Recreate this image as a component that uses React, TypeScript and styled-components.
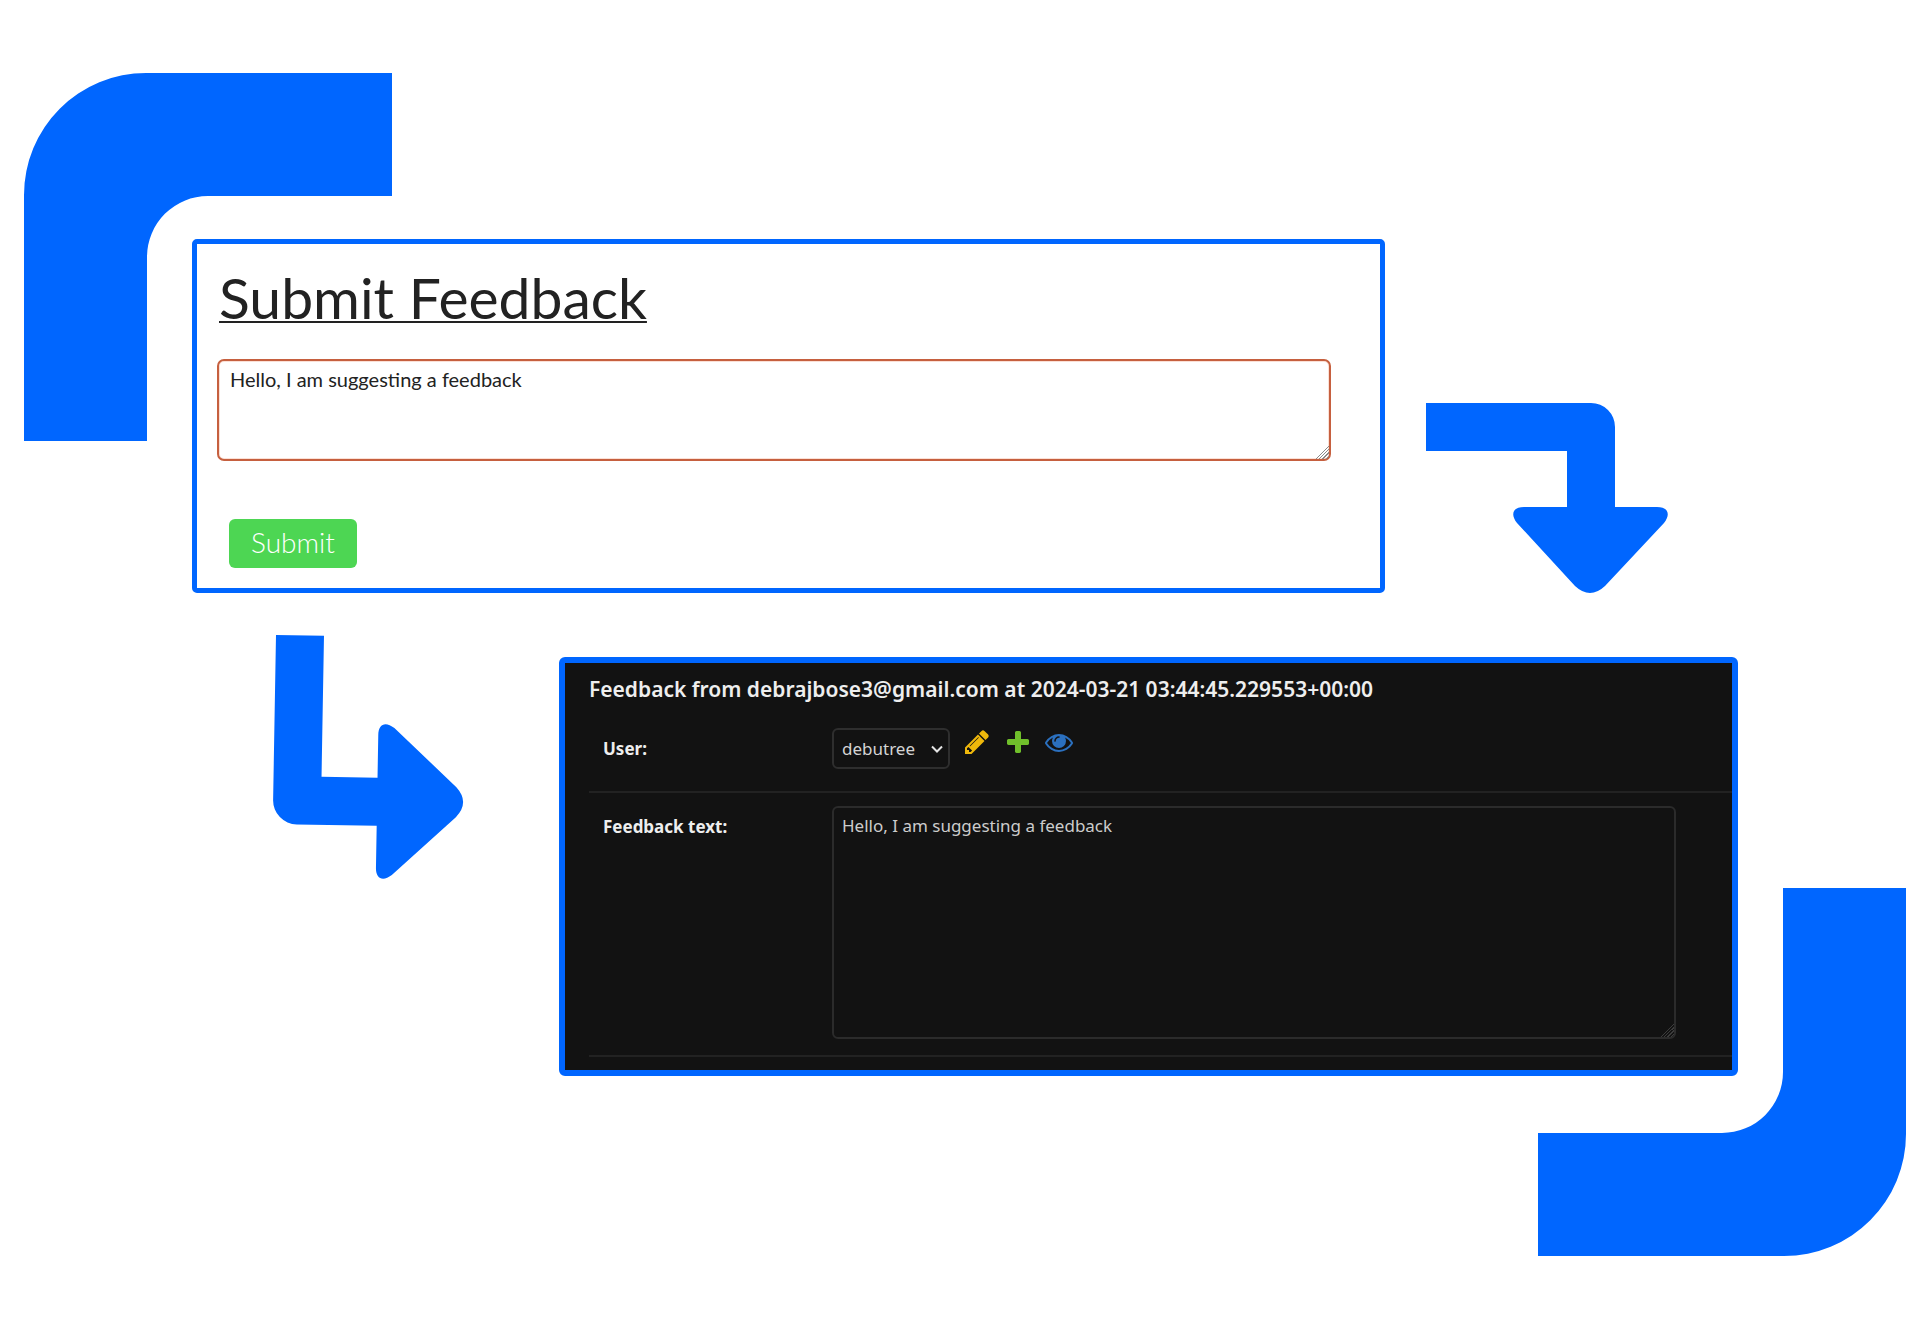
import React from "react";
import styled, { createGlobalStyle } from "styled-components";

const BLUE = "#0066ff";

const GlobalStyle = createGlobalStyle`
  *, *::before, *::after { box-sizing: border-box; }
  body { margin: 0; background: #ffffff; }
`;

const Page = styled.main`
  position: relative;
  display: flex;
  flex-direction: column;
  gap: 42px;
  min-height: 100vh;
  padding: 239px 0 70px;
  overflow: hidden;
`;

const Corner = styled.svg<{ $end?: boolean }>`
  position: absolute;
  width: 368px;
  height: 368px;
  fill: ${BLUE};
  ${(p) => (p.$end ? "right: 14px; bottom: 70px; transform: rotate(180deg);" : "left: 24px; top: 73px;")}
`;

const Step = styled.div<{ $second?: boolean }>`
  position: relative;
  display: flex;
  gap: ${(p) => (p.$second ? "96px" : "41px")};
  align-items: ${(p) => (p.$second ? "flex-start" : "flex-end")};
  padding: ${(p) => (p.$second ? "0 182px 0 273px" : "0 251px 0 192px")};
`;

const Arrow = styled.svg`
  flex: none;
  fill: ${BLUE};
  overflow: visible;
`;

const SubmitCard = styled.form`
  flex: 1;
  min-width: 0;
  display: flex;
  flex-direction: column;
  align-items: flex-start;
  padding: 23px 49px 20px 20px;
  border: 5px solid ${BLUE};
  border-radius: 5px;
  background: #ffffff;
  font-family: Lato, "Liberation Sans", sans-serif;
`;

const Title = styled.h1`
  margin: 0 0 32px;
  padding-left: 2px;
  color: #222222;
  font-size: 57px;
  font-weight: 400;
  line-height: 60px;
  text-decoration: underline;
  text-decoration-thickness: 2px;
  text-underline-offset: 2px;
  text-decoration-skip-ink: none;
`;

const TextArea = styled.textarea<{ $grip: string }>`
  display: block;
  width: 100%;
  outline: none;
  font-family: inherit;
  line-height: 26px;

  &::-webkit-resizer {
    background: linear-gradient(
      135deg,
      transparent 54%,
      ${(p) => p.$grip} 54% 59%,
      transparent 59% 65%,
      ${(p) => p.$grip} 65% 70%,
      transparent 70% 76%,
      ${(p) => p.$grip} 76% 81%,
      transparent 81% 87%,
      ${(p) => p.$grip} 87% 92%,
      transparent 92%
    );
  }
`;

const MessageBox = styled(TextArea)`
  height: 102px;
  margin-bottom: 58px;
  padding: 5px 11px;
  border: 2px solid #c6603f;
  border-radius: 7px;
  box-shadow: inset 0 0 0 1px #fbe0d6;
  background: #ffffff;
  color: #222222;
  font-size: 20px;
`;

const SubmitButton = styled.button`
  width: 128px;
  height: 49px;
  margin-left: 12px;
  padding: 0 0 4px;
  border: 0;
  border-radius: 6px;
  background: #4dd653;
  color: #ffffff;
  font-family: inherit;
  font-size: 28px;
  font-weight: 300;
  line-height: 36px;
`;

const AdminCard = styled.form`
  flex: 1;
  min-width: 0;
  margin-top: 22px;
  padding: 10px 0 13px 24px;
  border: 6px solid ${BLUE};
  border-radius: 6px;
  background: #121212;
  color: #eeeeee;
  color-scheme: dark;
  font-family: "Noto Sans", "Open Sans", sans-serif;
`;

const RecordTitle = styled.h2`
  margin: 0;
  font-size: 21px;
  font-weight: 600;
  line-height: 32px;
  white-space: nowrap;
`;

const FieldRow = styled.div<{ $tall?: boolean }>`
  display: grid;
  grid-template-columns: 229px minmax(0, 1fr);
  padding: ${(p) => (p.$tall ? "13px 56px 16px 14px" : "23px 56px 22px 14px")};
  border-bottom: 2px solid #222222;
`;

const FieldLabel = styled.label`
  padding-top: 8px;
  font-size: 17px;
  font-weight: 700;
  line-height: 26px;
`;

const Controls = styled.div`
  display: flex;
  align-items: flex-start;
  gap: 13px;
`;

const SelectWrap = styled.span`
  position: relative;
  display: block;
  width: 118px;
  height: 41px;
`;

const UserSelect = styled.select`
  appearance: none;
  width: 100%;
  height: 100%;
  padding: 0 8px;
  border: 2px solid #2e2e2e;
  border-radius: 6px;
  background: #121212;
  color: #d4d4d4;
  font-family: inherit;
  font-size: 17px;
`;

const Chevron = styled.svg`
  position: absolute;
  right: 7px;
  top: 16px;
  width: 12px;
  height: 10px;
  pointer-events: none;
`;

const IconLink = styled.a`
  display: block;
  width: 28px;
  height: 28px;
`;

const RecordText = styled(TextArea)`
  height: 233px;
  padding: 5px 8px;
  border: 2px solid #2b2b2b;
  border-radius: 6px;
  background: #121212;
  color: #cccccc;
  font-size: 17px;
`;

const CORNER_PATH = "M0 368V122A122 122 0 0 1 122 0H368V123H184A61 61 0 0 0 123 184V368Z";
const ARROW_PATH =
  "M0 0H165A24 24 0 0 1 189 24V104H231C242 104 245 111 238 120L179 183Q164 197 149 183L91 120C84 111 87 104 98 104H141V48H0Z";

const actions = [
  {
    name: "Change selected user",
    color: "#efb80b",
    d: "M491 1536l91-91-235-235-91 91v107h128v128h107zm523-928q0-22-22-22-10 0-17 7l-542 542q-7 7-7 17 0 22 22 22 10 0 17-7l542-542q7-7 7-17zm-54-192l416 416-832 832h-416v-416zm683 96q0 53-37 90l-166 166-416-416 166-165q36-38 90-38 53 0 91 38l235 234q37 39 37 91z",
  },
  {
    name: "Add another user",
    color: "#70bf2b",
    d: "M1600 796v192q0 40-28 68t-68 28h-416v416q0 40-28 68t-68 28h-192q-40 0-68-28t-28-68v-416h-416q-40 0-68-28t-28-68v-192q0-40 28-68t68-28h416v-416q0-40 28-68t68-28h192q40 0 68 28t28 68v416h416q40 0 68 28t28 68z",
  },
  {
    name: "View selected user",
    color: "#2b70bf",
    d: "M1664 960q-152-236-381-353 61 104 61 225 0 185-131.5 316.5t-316.5 131.5-316.5-131.5-131.5-316.5q0-121 61-225-229 117-381 353 133 205 333.5 326.5t434.5 121.5 434.5-121.5 333.5-326.5zm-720-384q0-20-14-34t-34-14q-125 0-214.5 89.5t-89.5 214.5q0 20 14 34t34 14 34-14 14-34q0-86 61-147t147-61q20 0 34-14t14-34zm848 384q0 34-20 69-140 230-376.5 368.5t-499.5 138.5-499.5-139-376.5-368q-20-35-20-69t20-69q140-229 376.5-368t499.5-139 499.5 139 376.5 368q20 35 20 69z",
  },
];

export default function App() {
  return (
    <>
      <GlobalStyle />
      <Page>
        <Corner viewBox="0 0 368 368" aria-hidden="true">
          <path d={CORNER_PATH} />
        </Corner>
        <Corner $end viewBox="0 0 368 368" aria-hidden="true">
          <path d={CORNER_PATH} />
        </Corner>

        <Step>
          <SubmitCard onSubmit={(e) => e.preventDefault()}>
            <Title>Submit Feedback</Title>
            <MessageBox
              $grip="#8a8a8a"
              aria-label="Feedback"
              spellCheck={false}
              defaultValue="Hello, I am suggesting a feedback"
            />
            <SubmitButton type="submit">Submit</SubmitButton>
          </SubmitCard>
          <Arrow width="243" height="190" viewBox="0 0 243 190" aria-hidden="true">
            <path d={ARROW_PATH} />
          </Arrow>
        </Step>

        <Step $second>
          <Arrow width="190" height="244" viewBox="0 0 190 244" aria-hidden="true">
            <path d={ARROW_PATH} transform="translate(3 0) rotate(1) matrix(0 1 1 0 0 0)" />
          </Arrow>
          <AdminCard onSubmit={(e) => e.preventDefault()}>
            <RecordTitle>Feedback from debrajbose3@gmail.com at 2024-03-21 03:44:45.229553+00:00</RecordTitle>
            <FieldRow>
              <FieldLabel htmlFor="user">User:</FieldLabel>
              <Controls>
                <SelectWrap>
                  <UserSelect id="user" defaultValue="debutree">
                    <option>debutree</option>
                  </UserSelect>
                  <Chevron viewBox="0 0 12 10" aria-hidden="true">
                    <path d="M1 2.5L6 7.5L11 2.5" fill="none" stroke="#e4e4e4" strokeWidth="2" />
                  </Chevron>
                </SelectWrap>
                {actions.map((a) => (
                  <IconLink key={a.name} href="#" aria-label={a.name}>
                    <svg width="28" height="28" viewBox="0 0 1792 1792" fill={a.color} aria-hidden="true">
                      <path d={a.d} />
                    </svg>
                  </IconLink>
                ))}
              </Controls>
            </FieldRow>
            <FieldRow $tall>
              <FieldLabel htmlFor="feedback-text">Feedback text:</FieldLabel>
              <RecordText
                $grip="#3c3c3c"
                id="feedback-text"
                spellCheck={false}
                defaultValue="Hello, I am suggesting a feedback"
              />
            </FieldRow>
          </AdminCard>
        </Step>
      </Page>
    </>
  );
}
